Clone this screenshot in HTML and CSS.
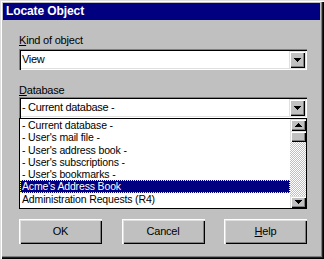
FILE: index.html
```html
<!DOCTYPE html>
<html>
<head>
<meta charset="utf-8">
<title>Locate Object</title>
<link rel="stylesheet" href="styles.css">
</head>
<body>
<div class="window">
  <div class="titlebar">Locate Object</div>
  <div class="content">
    <div class="label"><u>K</u>ind of object</div>
    <div class="combo">
      <span class="combo-value">View</span>
      <span class="drop-btn"><svg class="arrow" width="7" height="4" viewBox="0 0 7 4"><path d="M0 0h7v1h-1v1h-1v1h-1v1h-1v-1h-1v-1h-1v-1h-1z"/></svg></span>
    </div>
    <div class="label label-db"><u>D</u>atabase</div>
    <div class="combo">
      <span class="combo-value">- Current database -</span>
      <span class="drop-btn"><svg class="arrow" width="7" height="4" viewBox="0 0 7 4"><path d="M0 0h7v1h-1v1h-1v1h-1v1h-1v-1h-1v-1h-1v-1h-1z"/></svg></span>
    </div>
    <div class="listbox">
      <ul class="items">
        <li>- Current database -</li>
        <li>- User's mail file -</li>
        <li>- User's address book -</li>
        <li>- User's subscriptions -</li>
        <li>- User's bookmarks -</li>
        <li class="selected">Acme's Address Book</li>
        <li>Administration Requests (R4)</li>
      </ul>
      <div class="scrollbar">
        <div class="sb-btn"><svg class="arrow" width="7" height="4" viewBox="0 0 7 4"><path d="M3 0h1v1h1v1h1v1h1v1h-7v-1h1v-1h1v-1h1z"/></svg></div>
        <div class="sb-thumb"></div>
        <div class="sb-track"></div>
        <div class="sb-btn"><svg class="arrow" width="7" height="4" viewBox="0 0 7 4"><path d="M0 0h7v1h-1v1h-1v1h-1v1h-1v-1h-1v-1h-1v-1h-1z"/></svg></div>
      </div>
    </div>
    <div class="buttons">
      <div class="btn">OK</div>
      <div class="btn">Cancel</div>
      <div class="btn"><u>H</u>elp</div>
    </div>
  </div>
</div>
</body>
</html>
```

FILE: styles.css
```css
* { box-sizing: border-box; }

html, body {
  margin: 0;
  padding: 0;
  background: #c0c0c0;
}

body {
  width: 324px;
  height: 259px;
  overflow: hidden;
  font-family: "Liberation Sans", Arial, sans-serif;
  font-size: 11px;
  letter-spacing: -0.2px;
  color: #000;
}

.window {
  width: 324px;
  height: 259px;
  padding: 3px 4px 3px 3px;
  background: #c0c0c0;
  box-shadow:
    inset 1px 1px #dfdfdf,
    inset 2px 2px #ffffff,
    inset -1px -1px #000000,
    inset -2px -2px #202020,
    inset -3px -3px #808080;
}

.titlebar {
  height: 17px;
  background: #000080;
  color: #ffffff;
  font-weight: bold;
  font-size: 12px;
  letter-spacing: -0.1px;
  line-height: 17px;
  padding-left: 3px;
  white-space: nowrap;
}

.content {
  padding: 13px 13px 0 16px;
}

.label {
  height: 14px;
  line-height: 14px;
  margin-bottom: 2px;
  white-space: nowrap;
}

.label-db {
  margin-top: 13px;
  margin-bottom: 0;
}

.combo {
  height: 21px;
  padding: 2px;
  display: flex;
  align-items: stretch;
  background: #ffffff;
  box-shadow:
    inset 1px 1px #808080,
    inset 2px 2px #000000,
    inset -1px -1px #ffffff,
    inset -2px -2px #dfdfdf;
  font-size: 11px;
  letter-spacing: -0.3px;
}

.combo-value {
  flex: 1;
  line-height: 17px;
  padding-left: 1px;
  white-space: nowrap;
}

.drop-btn,
.sb-btn,
.sb-thumb {
  background: #c0c0c0;
  box-shadow:
    inset 1px 1px #dfdfdf,
    inset 2px 2px #ffffff,
    inset -1px -1px #000000,
    inset -2px -2px #808080;
}

.drop-btn {
  width: 16px;
  display: flex;
  align-items: center;
  justify-content: center;
}

.arrow {
  display: block;
  shape-rendering: crispEdges;
  fill: #000;
}

.listbox {
  height: 91px;
  display: flex;
  border: 1px solid #000000;
  background: #ffffff;
  font-size: 10.5px;
  letter-spacing: -0.15px;
}

.items {
  flex: 1;
  list-style: none;
  margin: 0;
  padding: 0;
}

.items li {
  height: 12.25px;
  line-height: 12.25px;
  padding-left: 2px;
  white-space: nowrap;
}

.items li.selected {
  background: #000080;
  color: #ffffff;
  outline: 1px dotted #ffff80;
  outline-offset: -1px;
}

.scrollbar {
  width: 16px;
  display: flex;
  flex-direction: column;
}

.sb-btn {
  height: 12px;
  display: flex;
  align-items: center;
  justify-content: center;
}

.sb-thumb {
  height: 11px;
}

.sb-track {
  flex: 1;
  background: repeating-conic-gradient(#c0c0c0 0 25%, #ffffff 0 50%) 0 0 / 2px 2px;
}

.buttons {
  margin-top: 10px;
  display: flex;
  justify-content: space-between;
}

.btn {
  width: 83px;
  height: 25px;
  line-height: 25px;
  text-align: center;
  background: #c0c0c0;
  box-shadow:
    inset 1px 1px #ffffff,
    inset 2px 2px #dfdfdf,
    inset -1px -1px #000000,
    inset -2px -2px #808080;
}
```
